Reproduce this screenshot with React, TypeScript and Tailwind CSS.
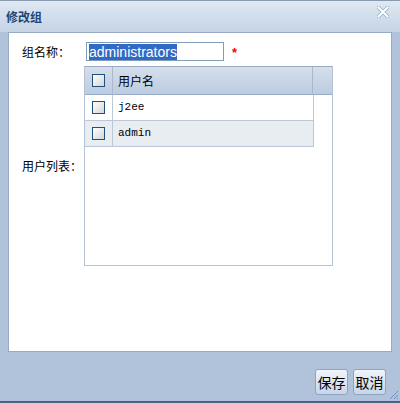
import React from "react";

const cjk = "font-['SimSun','Noto_Sans_CJK_SC',sans-serif]";

const Check = () => (
  <span className="block w-[13px] h-[13px] border border-[#1c5180] bg-gradient-to-br from-[#ffffff] to-[#d6d6d6]" />
);

const rows = [
  { name: "j2ee", bg: "bg-white" },
  { name: "admin", bg: "bg-[#e8edf2]" },
];

const EditGroupDialog = () => {
  return (
    <div className="relative w-[400px] h-[403px] flex flex-col bg-[#b1c3da] border-t border-[#8a9bb0] border-b-2 border-b-[#4b6283] overflow-hidden">
      <div className="h-[31px] shrink-0 flex items-center justify-between pl-[6px] pr-[11px] bg-gradient-to-b from-[#dfe8f3] to-[#c6d4e5]">
        <span className={`text-[12px] font-bold text-[#1e4576] ${cjk}`}>修改组</span>
        <svg width="12" height="12" viewBox="0 0 12 12" className="-mt-[10px]">
          <path d="M1.5 1.5 L10.5 10.5 M10.5 1.5 L1.5 10.5" stroke="#9aabc2" strokeWidth="3.5" strokeLinecap="square" />
          <path d="M1.5 1.5 L10.5 10.5 M10.5 1.5 L1.5 10.5" stroke="#ffffff" strokeWidth="2" strokeLinecap="square" />
        </svg>
      </div>

      <div className="mx-[8px] h-[320px] shrink-0 bg-white border border-[#99abc4] pt-[9px]">
        <div className="flex items-center">
          <span className={`w-[77px] pl-[13px] text-[12px] text-black ${cjk}`}>组名称：</span>
          <div className="w-[138px] h-[19px] border border-[#7f9db9] flex items-center pl-[2px]">
            <span className="bg-[#316ac5] text-white text-[14px] leading-[16px] font-['Liberation_Sans',sans-serif]">
              administrators
            </span>
          </div>
          <span className="ml-[8px] mt-[2px] text-[13px] leading-none text-[#ff0000] font-bold font-['Liberation_Sans',sans-serif]">*</span>
        </div>

        <div className="flex items-center mt-[5px]">
          <span className={`w-[75px] pl-[13px] text-[12px] text-black ${cjk}`}>用户列表：</span>
          <div className="w-[249px] h-[200px] border border-[#b4c2d3] border-t-[#99abc6] flex flex-col">
            <div className="h-[28px] flex bg-gradient-to-b from-[#d6dfeb] to-[#bccce1] border-b border-[#99abc6]">
              <div className="w-[28px] flex items-center justify-center border-r border-[#a9b8cc]">
                <Check />
              </div>
              <div className={`w-[200px] flex items-center pl-[5px] text-[12px] text-black border-r border-[#a9b8cc] ${cjk}`}>
                用户名
              </div>
              <div className="flex-1" />
            </div>
            {rows.map((r) => (
              <div key={r.name} className={`h-[26px] w-[229px] flex ${r.bg} border-b border-r border-[#bcc8d7]`}>
                <div className="w-[28px] flex items-center justify-center border-r border-[#bcc8d7]">
                  <Check />
                </div>
                <div className="flex items-center pl-[5px] text-[11px] text-black font-['Liberation_Mono',monospace]">
                  {r.name}
                </div>
              </div>
            ))}
          </div>
        </div>
      </div>

      <div className="flex-1 flex items-end justify-end gap-[5px] pr-[14px] pb-[6px]">
        <button className={`w-[33px] h-[26px] rounded-[3px] border border-[#8ea4c1] bg-gradient-to-b from-[#f1f5fa] to-[#c6d5e8] text-[14px] text-black ${cjk}`}>
          保存
        </button>
        <button className={`w-[33px] h-[26px] rounded-[3px] border border-[#8ea4c1] bg-gradient-to-b from-[#f1f5fa] to-[#c6d5e8] text-[14px] text-black ${cjk}`}>
          取消
        </button>
      </div>
      <svg width="12" height="12" viewBox="0 0 12 12" className="absolute right-[1px] bottom-[1px]">
        <path d="M11 3 L3 11 M11 7 L7 11 M11 10 L10 11" stroke="#6f8fc4" strokeWidth="1" />
      </svg>
    </div>
  );
};

export default function App() {
  return <EditGroupDialog />;
}
